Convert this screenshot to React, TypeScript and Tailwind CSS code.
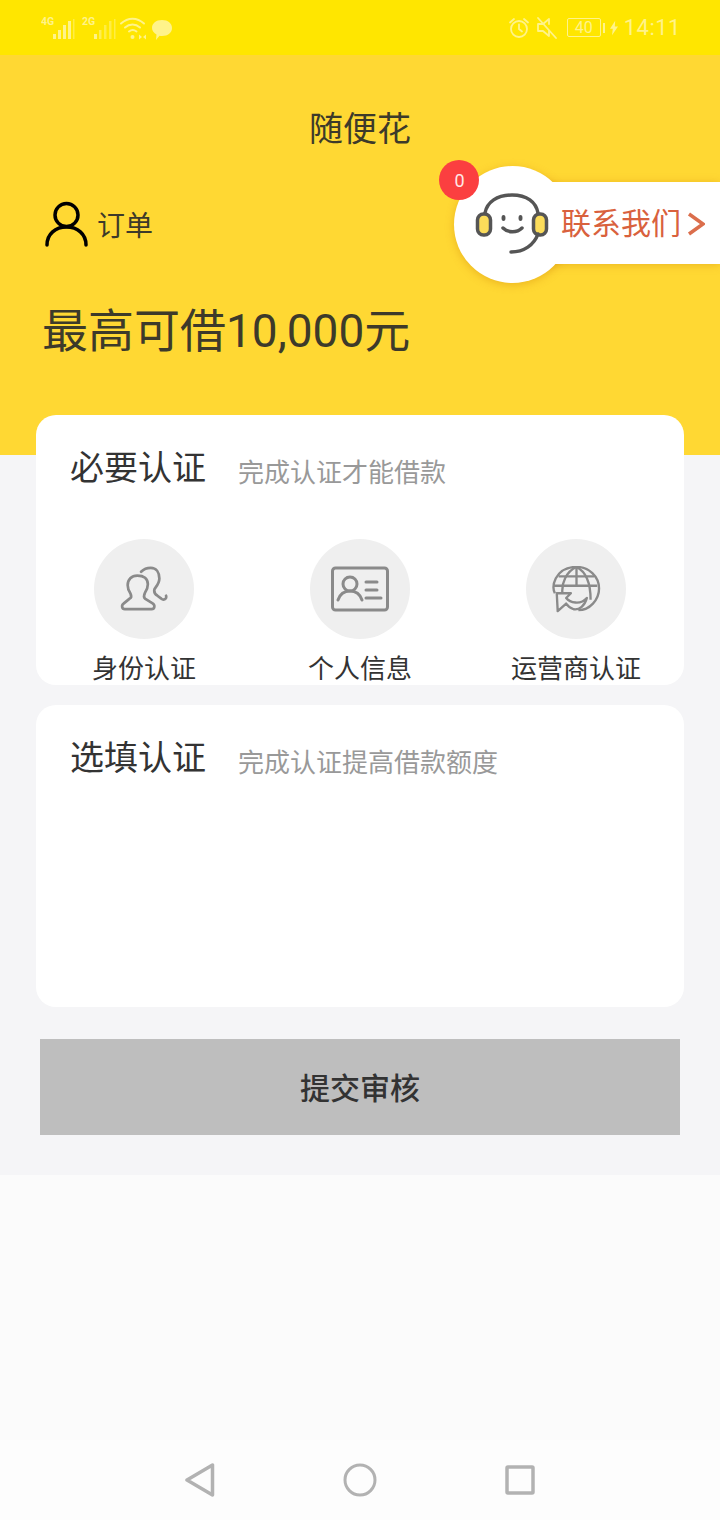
import React from "react";

const cjk = { fontFamily: "Roboto, 'Noto Sans CJK SC', sans-serif" };

function StatusBar() {
  return (
    <div className="h-[55px] bg-[#FFE600] flex items-center justify-between pl-[41px] pr-[39px]">
      <div className="flex items-center">
        <svg width="134" height="30" viewBox="0 0 134 30" fill="none">
          <text x="0" y="12" fontSize="10.500" fontWeight="700" fill="#FFF38A" fontFamily="Roboto">4G</text>
          <g fill="#FFF38A">
            <rect x="12" y="21" width="3" height="5" />
            <rect x="17" y="17" width="3" height="9" />
            <rect x="22" y="12" width="3" height="14" />
            <rect x="27" y="8" width="3" height="18" />
            <rect x="32" y="6" width="1.500" height="20" opacity="0.5" />
          </g>
          <text x="41" y="12" fontSize="10.500" fontWeight="700" fill="#FFF38A" fontFamily="Roboto">2G</text>
          <g fill="#FFF38A">
            <rect x="53" y="21" width="3" height="5" />
            <rect x="58" y="17" width="2.500" height="9" opacity="0.6" />
            <rect x="63" y="12" width="2.500" height="14" opacity="0.5" />
            <rect x="68" y="8" width="2.500" height="18" opacity="0.5" />
            <rect x="73" y="6" width="1.500" height="20" opacity="0.5" />
          </g>
          <g stroke="#FFF38A" strokeWidth="2" strokeLinecap="round">
            <path d="M80 10.500c7-6.500 16-6.500 23 0" />
            <path d="M84 14.500c4.500-4 10.500-4 15 0" />
            <path d="M88 18.500c2.500-2 5-2 7.500 0" />
          </g>
          <circle cx="91.500" cy="24" r="2" fill="#FFF38A" />
          <path d="M98 21.500v5l3-2.500zM105 21.500v5l-3-2.500z" fill="#FFF38A" />
          <path d="M121 7c6 0 10 3.500 10 8s-4 8-10 8c-1 0-1.500 0-2.500-.3L115 27l.5-5.500c-2.500-1.500-4.500-3.800-4.500-6.500 0-4.500 4-8 10-8z" fill="#FFF38A" />
        </svg>
      </div>
      <div className="flex items-center">
        <svg width="22" height="22" viewBox="0 0 22 22" fill="none" stroke="#FFF38A" strokeWidth="1.800" strokeLinecap="round">
          <circle cx="11" cy="12" r="8" />
          <path d="M11 7.500V12l3 2.500M2 5.500L6 2M20 5.500L16 2" />
        </svg>
        <svg className="ml-[6px]" width="22" height="24" viewBox="0 0 22 24" fill="none" stroke="#FFF38A" strokeWidth="1.800" strokeLinecap="round" strokeLinejoin="round">
          <path d="M13 8V3L7 8H2v7h5l6 5v-5" />
          <path d="M2 2l18 20" />
        </svg>
        <div className="ml-[9px] w-[34px] h-[19px] border border-[#FFF38A] rounded-[2px] flex items-center justify-center text-[16px] leading-none text-[#FFF38A]" style={{ fontFamily: "Roboto, sans-serif" }}>
          40
        </div>
        <div className="ml-[2px] w-[2px] h-[10px] bg-[#FFF38A]" />
        <svg className="ml-[5px]" width="8" height="18" viewBox="0 0 10 18">
          <path d="M6.500 0L0 10h3.500L2.500 18 10 7H6z" fill="#FFF38A" />
        </svg>
        <span className="ml-[6px] text-[22px] leading-none tracking-[0.5px] text-[#FFF38A]" style={{ fontFamily: "Roboto, sans-serif" }}>
          14:11
        </span>
      </div>
    </div>
  );
}

function ContactWidget() {
  return (
    <div className="absolute right-0 top-[111px] w-[281px] h-[117px]">
      <div className="absolute right-0 top-[16px] w-[200px] h-[82px] bg-white shadow-[0_1px_8px_rgba(200,120,0,0.35)]" />
      <div className="absolute left-[15px] top-0 w-[117px] h-[117px] rounded-full bg-white shadow-[0_2px_8px_rgba(200,120,0,0.35)]" />
      <div className="absolute right-0 top-[16px] w-[180px] h-[82px] bg-white" />
      <svg className="absolute left-[36px] top-[27px]" width="74" height="62" viewBox="0 0 74 62" fill="none">
        <path d="M10 20C12 9 22 2 37 2S61 9 63 20" stroke="#555" strokeWidth="3.500" strokeLinecap="round" />
        <rect x="2.500" y="21" width="13" height="21" rx="6" fill="#FBDC5A" stroke="#555" strokeWidth="3.500" />
        <rect x="58.500" y="21" width="13" height="21" rx="6" fill="#FBDC5A" stroke="#555" strokeWidth="3.500" />
        <path d="M63 41C59 52 49 59 36 59" stroke="#555" strokeWidth="3.500" strokeLinecap="round" />
        <ellipse cx="28.500" cy="25" rx="2" ry="3" fill="#555" />
        <ellipse cx="45.500" cy="25" rx="2" ry="3" fill="#555" />
        <path d="M28 35c5 5 14 5 19 0" stroke="#555" strokeWidth="3.500" strokeLinecap="round" />
      </svg>
      <div className="absolute left-0 top-[-6px] w-[40px] h-[40px] pl-[1px] rounded-full bg-[#FB3F40] flex items-center justify-center text-[18px] text-[#FFE7E7]" style={{ fontFamily: "Roboto, sans-serif" }}>
        0
      </div>
      <div className="absolute left-[122px] top-[16px] h-[82px] flex items-center text-[#D9613D]">
        <span className="mt-[2px] text-[30px] leading-none" style={cjk}>联系我们</span>
        <svg className="ml-[6px] mt-[2px]" width="18" height="24" viewBox="0 0 18 24" fill="none" stroke="#DB6E4C" strokeWidth="3.500">
          <path d="M2 2l14 10L2 22" />
        </svg>
      </div>
    </div>
  );
}

function Header() {
  return (
    <div className="relative h-[400px] bg-[#FFD833] text-[#3D3A2A]">
      <div className="pt-[51px] text-center text-[34px] leading-[46px]" style={cjk}>随便花</div>
      <div className="mt-[49px] pl-[45px] flex items-center">
        <svg width="43" height="46" viewBox="0 0 43 46" fill="none" stroke="#000" strokeWidth="3.500" strokeLinecap="round">
          <circle cx="21.500" cy="14" r="11.500" />
          <path d="M2 44c0-11 8.500-18 19.500-18S41 33 41 44" />
        </svg>
        <span className="ml-[9px] mt-[6px] text-[28px] leading-none" style={cjk}>订单</span>
      </div>
      <div className="mt-[52px] pl-[42px] text-[46px] leading-[64px]" style={cjk}>最高可借10,000元</div>
      <ContactWidget />
    </div>
  );
}

function IdIcon() {
  return (
    <svg width="48" height="48" viewBox="0 0 50 48" fill="none" stroke="#8A8A8A" strokeWidth="2.800" strokeLinecap="round" strokeLinejoin="round">
      <path d="M8 45H33C36 45 37 41 34 39L26 34C24 32 25 30 26 28C28 25 29 22 29 19C29 13 25 10 18 10C12 10 8 14 8 20C8 23 9 26 11 29C12 31 12 33 10 34L4 39C1 41 2 45 5 45z" />
      <path d="M22 6C25 3 29 2 32 2C38 2 41 7 41 13C41 18 38 21 36 24C35 27 36 29 39 31L43 34C45 36 49 35 48 31" />
    </svg>
  );
}

function CardIcon() {
  return (
    <svg width="58" height="46" viewBox="0 0 58 46" fill="none" stroke="#8A8A8A" strokeWidth="3" strokeLinecap="round">
      <rect x="1.500" y="2" width="55" height="42" rx="3" />
      <circle cx="19" cy="18" r="7" />
      <path d="M7 34c2-6 6.500-9 12-9s10 3 12 9" />
      <path d="M35 16h11M35 24h11M35 32h15" />
    </svg>
  );
}

function GlobeIcon() {
  return (
    <svg width="49" height="47" viewBox="0 0 52 50" fill="none" stroke="#8A8A8A" strokeWidth="2.500" strokeLinejoin="round">
      <path d="M3 29C1 25 1 19 4 13 8 6 16 1 26 1c13 0 24 10 24 23 0 12-10 23-22 23" />
      <path d="M11 29C10 18 15 6 26 1c10 5 15 17 15 35" />
      <path d="M26 1v20M7 11h38M2 21h46" />
      <path d="M5 29H20L15 34C19 39 30 42 37 34 35 42 29 47 23 46 20 45 17 43 15 40L6 48z" />
    </svg>
  );
}

function AuthItem({ label, children }: { label: string; children: React.ReactNode }) {
  return (
    <div className="flex flex-col items-center">
      <div className="w-[100px] h-[100px] rounded-full bg-[#EFEFEF] flex items-center justify-center">{children}</div>
      <div className="mt-[15px] text-[26px] leading-[30px] text-[#333]" style={cjk}>{label}</div>
    </div>
  );
}

function CardTitle({ title, sub }: { title: string; sub: string }) {
  return (
    <div className="flex items-center pt-[30px] pl-[34px]">
      <span className="text-[34px] leading-[46px] text-[#333]" style={cjk}>{title}</span>
      <span className="ml-[32px] mt-[10px] text-[26px] leading-[36px] text-[#999]" style={cjk}>{sub}</span>
    </div>
  );
}

export default function App() {
  return (
    <div className="w-[720px] h-[1520px] flex flex-col bg-[#FBFBFB] overflow-hidden" style={cjk}>
      <StatusBar />
      <Header />
      <div className="h-[720px] bg-[#F5F5F7] px-[36px]">
        <div className="-mt-[40px] relative h-[270px] bg-white rounded-[20px] overflow-hidden">
          <CardTitle title="必要认证" sub="完成认证才能借款" />
          <div className="mt-[48px] grid grid-cols-3">
            <AuthItem label="身份认证"><IdIcon /></AuthItem>
            <AuthItem label="个人信息"><CardIcon /></AuthItem>
            <AuthItem label="运营商认证"><GlobeIcon /></AuthItem>
          </div>
        </div>
        <div className="mt-[20px] h-[302px] bg-white rounded-[20px]">
          <CardTitle title="选填认证" sub="完成认证提高借款额度" />
        </div>
        <div className="mt-[32px] mx-[4px] h-[96px] bg-[#BEBEBE] flex items-center justify-center pt-[3px] text-[30px] font-medium text-[#333]" style={cjk}>
          提交审核
        </div>
      </div>
      <div className="flex-1" />
      <div className="h-[80px] bg-[#FDFDFD] flex items-center justify-center">
        <div className="w-[400px] flex items-center justify-between px-[25px]">
          <svg width="30" height="34" viewBox="0 0 30 34" fill="none" stroke="#B2B2B2" strokeWidth="3.500" strokeLinejoin="round">
            <path d="M27.500 2v30L2 17z" />
          </svg>
          <svg width="34" height="34" viewBox="0 0 34 34" fill="none" stroke="#B2B2B2" strokeWidth="3">
            <circle cx="17" cy="17" r="15" />
          </svg>
          <svg width="30" height="30" viewBox="0 0 30 30" fill="none" stroke="#B2B2B2" strokeWidth="3.500" strokeLinejoin="round">
            <rect x="2" y="2" width="26" height="26" rx="1" />
          </svg>
        </div>
      </div>
    </div>
  );
}
